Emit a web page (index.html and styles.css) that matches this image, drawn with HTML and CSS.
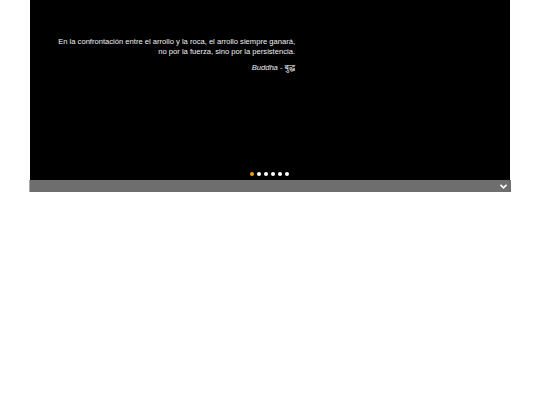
FILE: index.html
```html
<!DOCTYPE html>
<html lang="es">
<head>
<meta charset="utf-8">
<title>Slider</title>
<link rel="stylesheet" href="styles.css">
</head>
<body>
<div class="slider">
  <div class="slide">
    <div class="caption">
      <p class="quote">En la confrontación entre el arrollo y la roca, el arrollo siempre ganará,<br>no por la fuerza, sino por la persistencia.</p>
      <p class="author">Buddha - बुद्ध</p>
    </div>
    <div class="dots">
      <span class="dot active"></span>
      <span class="dot"></span>
      <span class="dot"></span>
      <span class="dot"></span>
      <span class="dot"></span>
      <span class="dot"></span>
    </div>
  </div>
  <div class="bar">
    <svg class="chev" width="7" height="5" viewBox="0 0 7 5"><path d="M0.5 0.8 L3.5 3.8 L6.5 0.8" fill="none" stroke="#fff" stroke-width="1.6"/></svg>
  </div>
</div>
</body>
</html>
```
FILE: styles.css
```css
html, body { margin: 0; padding: 0; background: #fff; }
body { font-family: "Liberation Sans", Arial, sans-serif; }
.slider { margin-left: 29px; width: 482px; }
.slide {
  background: #000;
  height: 180px;
  margin-left: 1px;
  width: 480px;
  display: flex;
  flex-direction: column;
  justify-content: space-between;
}
.caption { width: 265px; padding-top: 37px; text-align: right; color: #f2f2f2; }
.quote { margin: 0; font-size: 7.6px; line-height: 10px; }
.author { margin: 6px 0 0; font-size: 7.6px; line-height: 10px; font-style: italic; font-family: "Liberation Sans", "Noto Sans", sans-serif; }
.dots { display: flex; justify-content: center; gap: 3px; padding-bottom: 4px; margin-right: 1px; }
.dot { width: 4px; height: 4px; border-radius: 50%; background: #fff; }
.dot.active { background: #f39c12; }
.bar {
  height: 12px;
  background: #6e6e6e;
  border-left: 1px solid #a6a6a6;
  display: flex;
  justify-content: flex-end;
  align-items: center;
  padding-right: 4px;
}
.chev { display: block; }
```
